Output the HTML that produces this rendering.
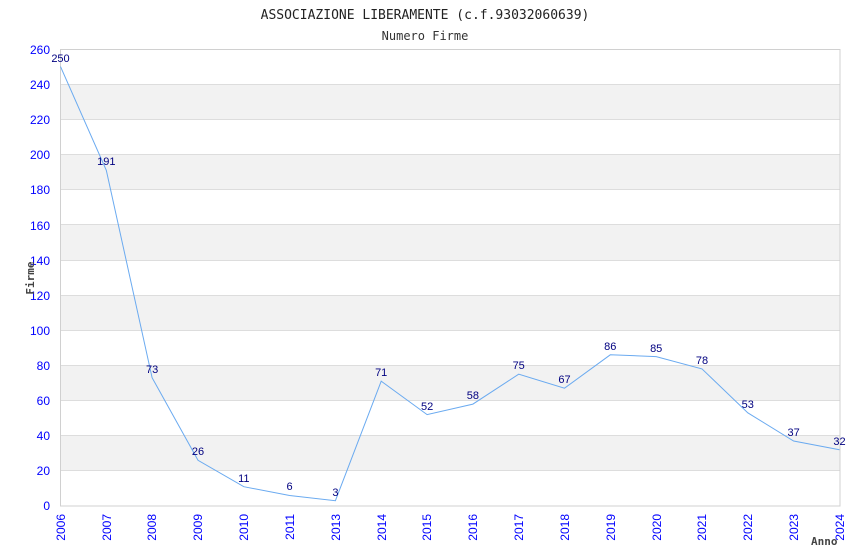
<!DOCTYPE html>
<html><head><meta charset="utf-8"><style>body{margin:0;background:#fff}svg{display:block}</style></head><body>
<svg width="850" height="550" xmlns="http://www.w3.org/2000/svg">
<text x="425" y="19" text-anchor="middle" font-family="DejaVu Sans Mono, Liberation Mono, monospace" font-size="13" fill="#222">ASSOCIAZIONE LIBERAMENTE (c.f.93032060639)</text>
<text x="425" y="40" text-anchor="middle" font-family="DejaVu Sans Mono, Liberation Mono, monospace" font-size="12" fill="#333">Numero Firme</text>
<g fill="#f2f2f2">
<rect x="61" y="84.2" width="779" height="35.2"/>
<rect x="61" y="154.5" width="779" height="35.2"/>
<rect x="61" y="224.8" width="779" height="35.2"/>
<rect x="61" y="295.1" width="779" height="35.2"/>
<rect x="61" y="365.4" width="779" height="35.2"/>
<rect x="61" y="435.7" width="779" height="35.2"/>
</g>
<g stroke="#dddddd" stroke-width="1">
<line x1="61" x2="840" y1="84.5" y2="84.5"/><line x1="61" x2="840" y1="119.5" y2="119.5"/>
<line x1="61" x2="840" y1="154.5" y2="154.5"/><line x1="61" x2="840" y1="189.5" y2="189.5"/>
<line x1="61" x2="840" y1="224.5" y2="224.5"/><line x1="61" x2="840" y1="260.5" y2="260.5"/>
<line x1="61" x2="840" y1="295.5" y2="295.5"/><line x1="61" x2="840" y1="330.5" y2="330.5"/>
<line x1="61" x2="840" y1="365.5" y2="365.5"/><line x1="61" x2="840" y1="400.5" y2="400.5"/>
<line x1="61" x2="840" y1="435.5" y2="435.5"/><line x1="61" x2="840" y1="470.5" y2="470.5"/>
</g>
<rect x="60.5" y="49.5" width="779.5" height="456.5" fill="none" stroke="#d0d0d0"/>
<g font-family="Liberation Sans, sans-serif" font-size="12" fill="#0000ff" text-anchor="end">
<text x="50" y="54">260</text><text x="50" y="89">240</text><text x="50" y="124">220</text><text x="50" y="159">200</text><text x="50" y="194">180</text><text x="50" y="230">160</text><text x="50" y="265">140</text><text x="50" y="300">120</text><text x="50" y="335">100</text><text x="50" y="370">80</text><text x="50" y="405">60</text><text x="50" y="440">40</text><text x="50" y="475">20</text><text x="50" y="510">0</text>
</g>
<g font-family="Liberation Sans, sans-serif" font-size="12" fill="#0000ff" text-anchor="end">
<text transform="translate(65,514) rotate(-90)">2006</text>
<text transform="translate(111,514) rotate(-90)">2007</text>
<text transform="translate(156,514) rotate(-90)">2008</text>
<text transform="translate(202,514) rotate(-90)">2009</text>
<text transform="translate(248,514) rotate(-90)">2010</text>
<text transform="translate(294,514) rotate(-90)">2011</text>
<text transform="translate(340,514) rotate(-90)">2013</text>
<text transform="translate(386,514) rotate(-90)">2014</text>
<text transform="translate(431,514) rotate(-90)">2015</text>
<text transform="translate(477,514) rotate(-90)">2016</text>
<text transform="translate(523,514) rotate(-90)">2017</text>
<text transform="translate(569,514) rotate(-90)">2018</text>
<text transform="translate(615,514) rotate(-90)">2019</text>
<text transform="translate(661,514) rotate(-90)">2020</text>
<text transform="translate(706,514) rotate(-90)">2021</text>
<text transform="translate(752,514) rotate(-90)">2022</text>
<text transform="translate(798,514) rotate(-90)">2023</text>
<text transform="translate(844,514) rotate(-90)">2024</text>
</g>
<text transform="translate(34,278) rotate(-90)" text-anchor="middle" font-family="DejaVu Sans Mono, monospace" font-size="11" font-weight="bold" fill="#444">Firme</text>
<text x="811" y="545" font-family="DejaVu Sans Mono, monospace" font-size="11" font-weight="bold" fill="#444">Anno</text>
<polyline fill="none" stroke="#6aaaf0" stroke-width="1" points="60.5,66.6 106.3,170.3 152.1,377.7 198,460.3 243.8,486.7 289.6,495.5 335.4,500.7 381.2,381.2 427.1,414.6 472.9,404.1 518.7,374.2 564.5,388.2 610.3,354.8 656.2,356.6 702,368.9 747.8,412.8 793.6,441 839.5,449.8"/>
<g font-family="Liberation Sans, sans-serif" font-size="11" fill="#000080" text-anchor="middle">
<text x="60.5" y="62">250</text><text x="106.3" y="165">191</text><text x="152.1" y="373">73</text><text x="198" y="455">26</text><text x="243.8" y="482">11</text><text x="289.6" y="490">6</text><text x="335.4" y="496">3</text><text x="381.2" y="376">71</text><text x="427.1" y="410">52</text><text x="472.9" y="399">58</text><text x="518.7" y="369">75</text><text x="564.5" y="383">67</text><text x="610.3" y="350">86</text><text x="656.2" y="352">85</text><text x="702" y="364">78</text><text x="747.8" y="408">53</text><text x="793.6" y="436">37</text><text x="839.5" y="445">32</text>
</g>
</svg>
</body></html>
